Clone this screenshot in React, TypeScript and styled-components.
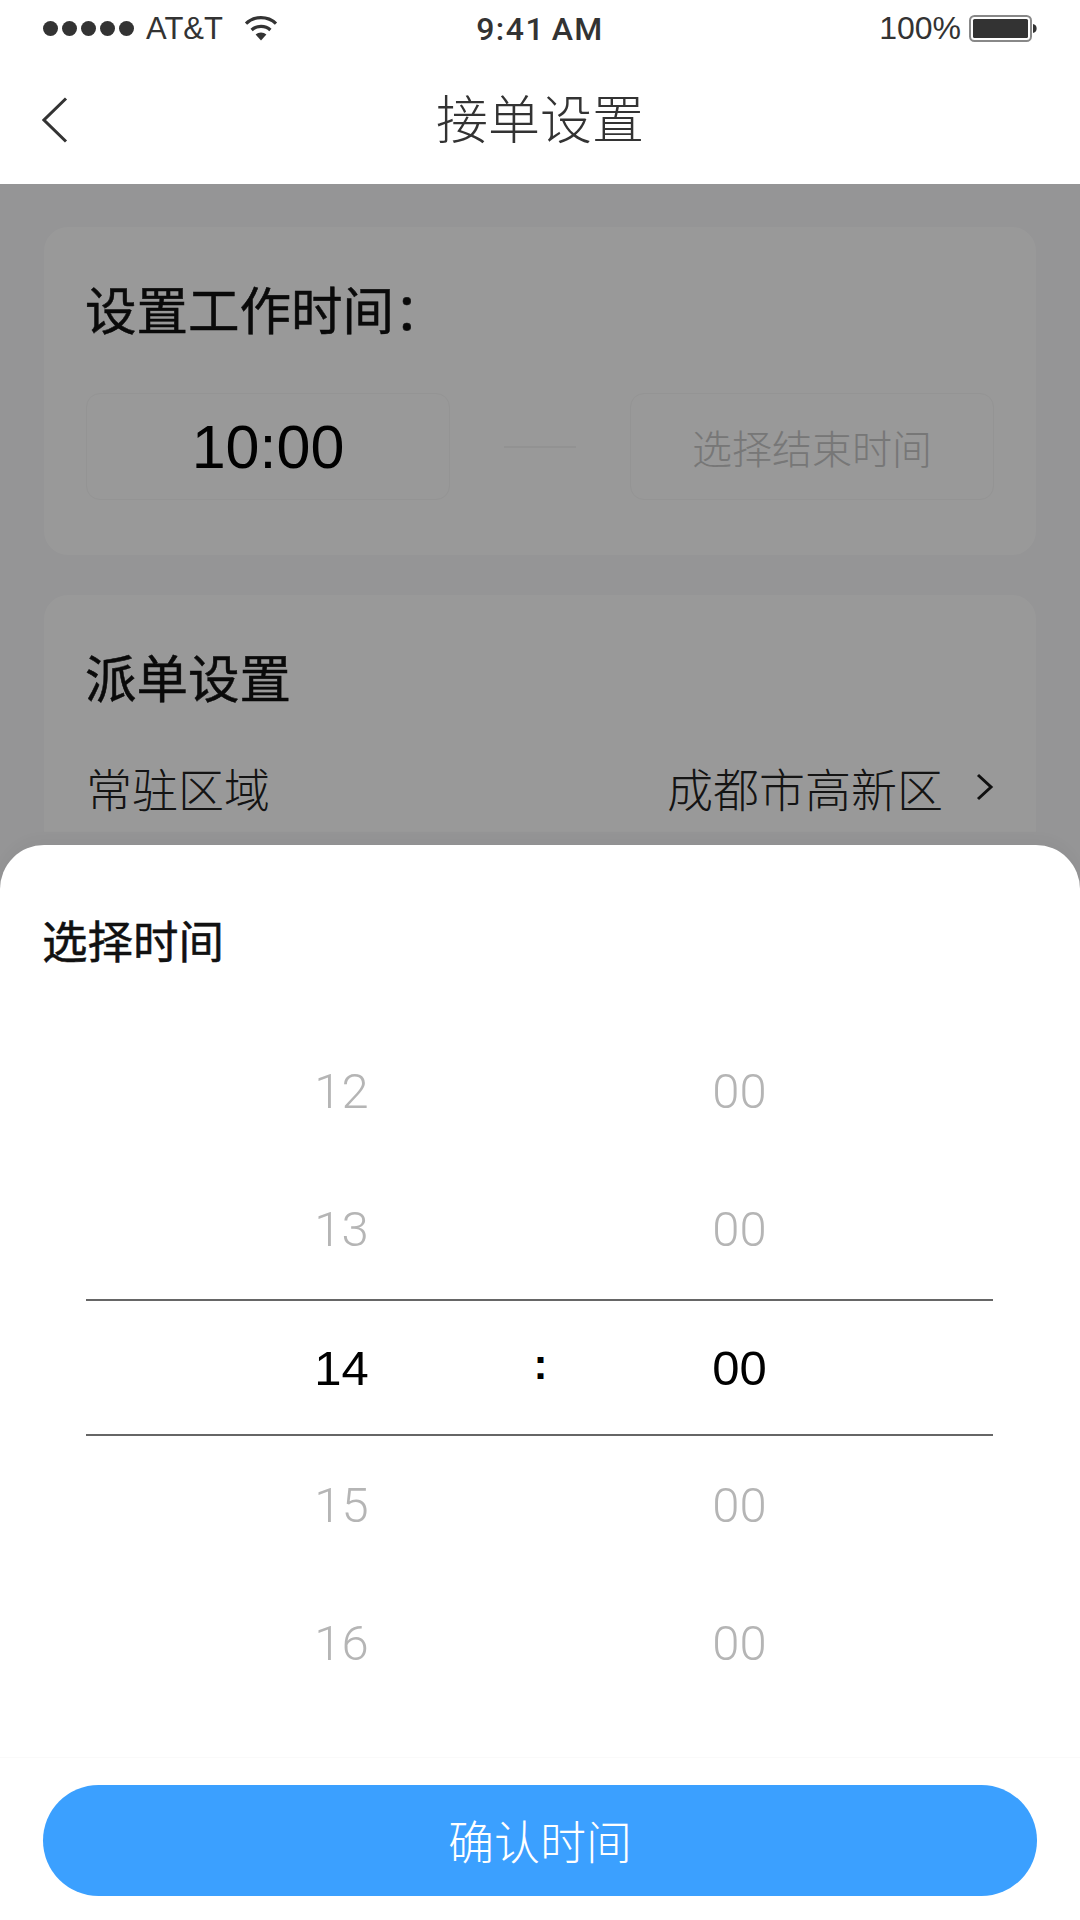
import React from "react";
import styled, { createGlobalStyle } from "styled-components";

const cjk = `"Liberation Sans", "Noto Sans CJK SC", sans-serif`;

const hours = ["12", "13", "14", "15", "16"];
const ACTIVE = "14";

const GlobalStyle = createGlobalStyle`
  html, body {
    margin: 0;
    padding: 0;
    background: #fff;
  }
  * {
    box-sizing: border-box;
  }
`;

export default function App() {
  return (
    <Page>
      <GlobalStyle />
      <StatusBar>
        <StatusLeft>
          <Dots>
            {[0, 1, 2, 3, 4].map((i) => (
              <Dot key={i} />
            ))}
          </Dots>
          <Carrier>AT&amp;T</Carrier>
          <svg width="34" height="25" viewBox="0 0 34 25">
            <path d="M17 24.5 L11.6 18.6 C14.6 15.9 19.4 15.9 22.4 18.6 Z" fill="#333" />
            <path d="M7.6 14 C12.6 9.2 21.4 9.2 26.4 14" fill="none" stroke="#333" strokeWidth="3.2" />
            <path d="M2 7.6 C10.2 -0.4 23.8 -0.4 32 7.6" fill="none" stroke="#333" strokeWidth="3.2" />
          </svg>
        </StatusLeft>
        <Clock>9:41 AM</Clock>
        <StatusRight>
          <Percent>100%</Percent>
          <svg width="68" height="27" viewBox="0 0 68 27">
            <rect x="1" y="1" width="61" height="25" rx="4.5" fill="none" stroke="#888" strokeWidth="2" />
            <rect x="4" y="4" width="55" height="19" rx="1.5" fill="#333" />
            <path d="M64 9 C67 9.6 67.6 11.4 67.6 13.5 C67.6 15.6 67 17.4 64 18 Z" fill="#333" />
          </svg>
        </StatusRight>
      </StatusBar>

      <NavBar>
        <BackIcon width="26" height="46" viewBox="0 0 26 46">
          <path d="M24 1.5 L2 23 L24 44.5" fill="none" stroke="#333" strokeWidth="3" />
        </BackIcon>
        <NavTitle>接单设置</NavTitle>
      </NavBar>

      <Content>
        <Card>
          <WorkTitle>设置工作时间：</WorkTitle>
          <TimeRow>
            <TimeBox>
              <StartTime>10:00</StartTime>
            </TimeBox>
            <Dash />
            <TimeBox>
              <Placeholder>选择结束时间</Placeholder>
            </TimeBox>
          </TimeRow>
        </Card>
        <Card short>
          <WorkTitle>派单设置</WorkTitle>
          <AreaRow>
            <AreaLabel>常驻区域</AreaLabel>
            <AreaValue>
              成都市高新区
              <svg width="18" height="28" viewBox="0 0 18 28">
                <path d="M2 2 L15 14 L2 26" fill="none" stroke="#1c1c1c" strokeWidth="3" />
              </svg>
            </AreaValue>
          </AreaRow>
        </Card>
        <Overlay />
      </Content>

      <Sheet>
        <SheetTitle>选择时间</SheetTitle>
        <Wheel>
          {hours.map((hour) => {
            const active = hour === ACTIVE;
            return (
              <WheelRow key={hour} active={active}>
                <WheelValue active={active}>{hour}</WheelValue>
                <Colon active={active}>{active ? ":" : ""}</Colon>
                <WheelValue active={active}>00</WheelValue>
              </WheelRow>
            );
          })}
        </Wheel>
        <SheetFooter>
          <ConfirmButton>确认时间</ConfirmButton>
        </SheetFooter>
      </Sheet>
    </Page>
  );
}

const Page = styled.div`
  position: relative;
  display: flex;
  flex-direction: column;
  width: 1080px;
  height: 1920px;
  overflow: hidden;
  background: #fff;
  font-family: ${cjk};
`;

const StatusBar = styled.div`
  display: grid;
  grid-template-columns: 1fr auto 1fr;
  align-items: center;
  height: 56px;
  padding: 1px 43px 0;
  color: #333;
`;

const StatusLeft = styled.div`
  display: flex;
  align-items: center;
`;

const Dots = styled.div`
  display: flex;
  gap: 4px;
  margin-right: 12px;
`;

const Dot = styled.span`
  width: 15px;
  height: 15px;
  border-radius: 50%;
  background: #333;
`;

const Carrier = styled.span`
  margin-right: 21px;
  font-size: 31px;
`;

const Clock = styled.span`
  font-family: "Roboto", "Liberation Sans", sans-serif;
  font-size: 32px;
  font-weight: 500;
  letter-spacing: 1.5px;
  word-spacing: -3px;
`;

const StatusRight = styled.div`
  display: flex;
  align-items: center;
  justify-content: flex-end;
  gap: 8px;
`;

const Percent = styled.span`
  font-size: 32px;
`;

const NavBar = styled.div`
  position: relative;
  display: flex;
  align-items: center;
  justify-content: center;
  height: 128px;
  padding-bottom: 8px;
`;

const BackIcon = styled.svg`
  position: absolute;
  left: 42px;
  top: 41px;
`;

const NavTitle = styled.div`
  font-size: 52px;
  font-weight: 300;
  color: #333;
`;

const Content = styled.div`
  position: relative;
  display: flex;
  flex-direction: column;
  gap: 40px;
  flex: 1;
  padding: 43px 44px 0;
  background: #f8f8fa;
`;

const Overlay = styled.div`
  position: absolute;
  inset: 0;
  background: rgba(0, 0, 0, 0.4);
`;

const Card = styled.div<{ short?: boolean }>`
  height: ${({ short }) => (short ? "237px" : "328px")};
  padding: 53px 42px 0;
  border-radius: ${({ short }) => (short ? "24px 24px 0 0" : "24px")};
  background: #fff;
`;

const WorkTitle = styled.div`
  height: 60px;
  margin-top: 2px;
  margin-left: -1px;
  font-size: 51.5px;
  font-weight: 400;
  line-height: 60px;
  color: #111;
  white-space: nowrap;
  -webkit-text-stroke: 0.5px #111;
`;

const TimeRow = styled.div`
  display: flex;
  align-items: center;
  justify-content: space-between;
  margin-top: 51px;
`;

const TimeBox = styled.div`
  display: flex;
  align-items: center;
  justify-content: center;
  width: 364px;
  height: 107px;
  border: 1px solid #f7f7f7;
  border-radius: 14px;
`;

const StartTime = styled.span`
  font-size: 61px;
  color: #000;
`;

const Placeholder = styled.span`
  font-size: 40px;
  font-weight: 300;
  color: #c6c6c6;
`;

const Dash = styled.div`
  width: 72px;
  height: 2px;
  background: #f3f3f3;
`;

const AreaRow = styled.div`
  display: flex;
  align-items: center;
  justify-content: space-between;
  margin-top: 44px;
`;

const AreaLabel = styled.span`
  font-size: 46px;
  font-weight: 300;
  color: #222;
`;

const AreaValue = styled(AreaLabel)`
  display: flex;
  align-items: center;
  gap: 33px;
`;

const Sheet = styled.div`
  position: absolute;
  left: 0;
  right: 0;
  top: 845px;
  bottom: 0;
  display: flex;
  flex-direction: column;
  border-radius: 44px 44px 0 0;
  background: #fff;
  box-shadow: 0 -6px 14px rgba(0, 0, 0, 0.03);
`;

const SheetTitle = styled.div`
  height: 60px;
  margin: 69px 0 0 42px;
  font-size: 45.5px;
  font-weight: 400;
  line-height: 60px;
  color: #111;
  -webkit-text-stroke: 0.5px #111;
`;

const Wheel = styled.div`
  margin: 48px 87px 0 86px;
`;

const WheelRow = styled.div<{ active: boolean }>`
  display: grid;
  grid-template-columns: repeat(3, 199px);
  justify-content: center;
  align-items: center;
  height: ${({ active }) => (active ? "137px" : "138px")};
  margin: ${({ active }) => (active ? "1px 0 0" : "0")};
  border-top: ${({ active }) => (active ? "2px solid #666" : "none")};
  border-bottom: ${({ active }) => (active ? "2px solid #666" : "none")};
`;

const WheelValue = styled.span<{ active: boolean }>`
  position: relative;
  left: 1px;
  font-family: ${({ active }) => (active ? '"Liberation Sans"' : '"Roboto"')}, sans-serif;
  font-size: 49px;
  font-weight: ${({ active }) => (active ? 400 : 300)};
  text-align: center;
  color: ${({ active }) => (active ? "#000" : "#b5b5b5")};
`;

const Colon = styled(WheelValue)`
  padding-bottom: 6px;
  font-size: 42px;
  font-weight: 700;
`;

const SheetFooter = styled.div`
  margin-top: auto;
  padding: 27px 43px 24px;
  border-top: 1px solid #fafafa;
`;

const ConfirmButton = styled.div`
  display: flex;
  align-items: center;
  justify-content: center;
  height: 111px;
  padding-bottom: 4px;
  border-radius: 56px;
  font-size: 46px;
  font-weight: 300;
  color: #fff;
  background: #3ba0ff;
`;
